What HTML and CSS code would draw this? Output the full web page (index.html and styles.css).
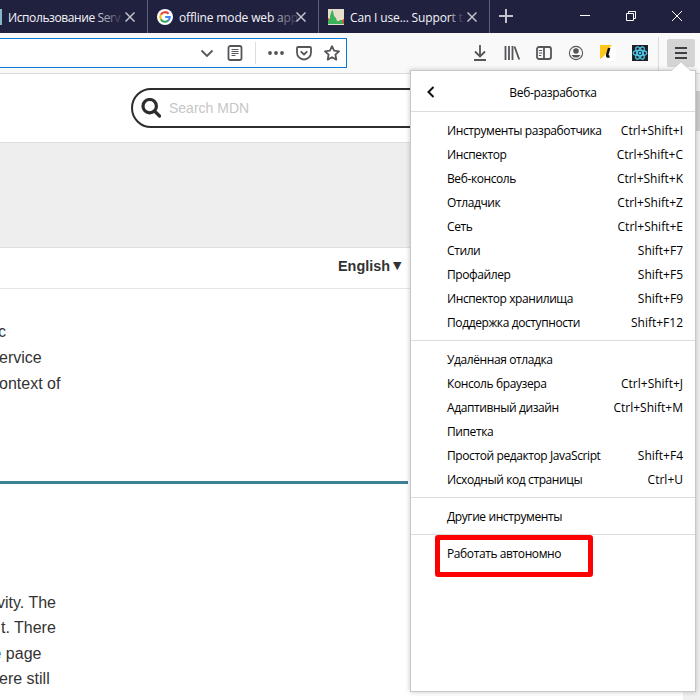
FILE: index.html
```html
<!DOCTYPE html>
<html lang="ru">
<head>
<meta charset="utf-8">
<title>Веб-разработка</title>
<link rel="stylesheet" href="styles.css">
</head>
<body>
<div class="window">
  <header class="tabs">
    <div class="tab tab-first">
      <span class="favicon-strip"></span>
      <span class="tab-title">Использование <span class="f1">S</span><span class="f2">e</span><span class="f3">r</span><span class="f4">v</span></span>
      <svg class="close" viewBox="0 0 10 10"><path d="M.5.5l9 9M9.5.5l-9 9"/></svg>
    </div>
    <div class="tab tab-google">
      <svg class="favicon" viewBox="0 0 16 16"><circle cx="8" cy="8" r="8" fill="#fff"/><g fill="none" stroke-width="2.1"><path d="M11.6 4.7A4.8 4.8 0 0 0 3.8 5.7" stroke="#ea4335"/><path d="M3.8 5.7a4.8 4.8 0 0 0 0 4.6" stroke="#fbbc05"/><path d="M3.8 10.3a4.8 4.8 0 0 0 7.3 1.3" stroke="#34a853"/><path d="M11.1 11.6A4.8 4.8 0 0 0 12.8 8H8.2" stroke="#4285f4"/></g></svg>
      <span class="tab-title">offline mode web <span class="f2">a</span><span class="f3">p</span><span class="f4">p</span></span>
      <svg class="close" viewBox="0 0 10 10"><path d="M.5.5l9 9M9.5.5l-9 9"/></svg>
    </div>
    <div class="tab tab-caniuse">
      <svg class="favicon" viewBox="0 0 16 16"><path fill="#e6decb" d="M0 0h16v16H0z"/><path fill="#e04b3a" d="M0 9l2 1 2-1 4 4 3-1 3-1 2-1v5H0z"/><path fill="#38b45a" d="M0 15v-3l2-2V7l1-3 1-3 1 1 1 5 2 2 1 3 2 1 1-2 2 0 1 3v1z"/></svg>
      <span class="tab-title">Can I use... Suppor<span class="f2">t</span> <span class="f4">t</span></span>
      <svg class="close" viewBox="0 0 10 10"><path d="M.5.5l9 9M9.5.5l-9 9"/></svg>
    </div>
    <svg class="new-tab" viewBox="0 0 14 14"><path d="M7 0v14M0 7h14"/></svg>
    <div class="controls">
      <svg viewBox="0 0 10 10"><path d="M0 4.5h10"/></svg>
      <svg viewBox="0 0 10 10"><path d="M.5 2.5h7v7h-7zM2.500 2.500v-2h7v7h-2"/></svg>
      <svg viewBox="0 0 10 10"><path d="M0 0l10 10M10 0L0 10"/></svg>
    </div>
  </header>

  <nav class="toolbar">
    <div class="urlbar">
      <svg class="ic chevron" viewBox="0 0 16 16"><path d="M2.500 5.500L8 11l5.500-5.500"/></svg>
      <svg class="ic reader" viewBox="0 0 16 16"><rect x="1.500" y="1" width="13" height="14" rx="1.800"/><path class="thin" d="M4.500 4.500h7M4.500 6.500h7M4.500 8.500h7M4.500 10.500h4"/></svg>
      <span class="url-sep"></span>
      <svg class="ic dots" viewBox="0 0 16 16"><g class="solid"><circle cx="2" cy="8" r="1.900"/><circle cx="8" cy="8" r="1.900"/><circle cx="14" cy="8" r="1.900"/></g></svg>
      <svg class="ic pocket" viewBox="0 0 16 16"><path d="M2 2h12a1 1 0 0 1 1 1v4.500a7 7 0 0 1-14 0V3a1 1 0 0 1 1-1z"/><path d="M4.700 6.300L8 9.500l3.300-3.200"/></svg>
      <svg class="ic star" viewBox="0 0 16 16"><path stroke-linejoin="round" d="M8 1.200l2.100 4.500 4.900.6-3.600 3.400.9 4.900L8 12.200l-4.300 2.400.9-4.900L1 6.300l4.900-.6z"/></svg>
    </div>
    <div class="tools">
      <svg class="ic" viewBox="0 0 16 16"><path d="M8 0v11M3 6.500l5 5 5-5M2 15h12"/></svg>
      <svg class="ic" viewBox="0 0 16 16"><path d="M1.500 1v14M5 1v14M8.500 1v14M10.500 1.500l4.700 13"/></svg>
      <svg class="ic" viewBox="0 0 16 16"><rect x="1" y="2" width="14" height="12" rx="2"/><path d="M8 2v12"/><path class="thin" d="M2.800 5.500h3.400M2.800 8h3.400M2.800 10.500h2.500"/></svg>
      <svg class="ic" viewBox="0 0 16 16"><circle cx="8" cy="8" r="6.600" stroke-width="1.100"/><g class="solid"><circle cx="8" cy="6" r="2.800"/><path d="M3.500 10h9a5.200 5.200 0 0 1-9 0z"/></g></svg>
      <svg class="ic" viewBox="0 0 16 16"><path fill="#fff" stroke="none" d="M0 0h16v16H0z"/><path fill="#ffc61a" stroke="none" d="M0 0h12C8 4 8 9 0 14z"/><path stroke="#111" stroke-width="2.600" d="M9.200 3L7.300 9.500c-.5 2 .3 2.300 2.200 1.800"/></svg>
      <svg class="ic" viewBox="0 0 16 16"><path fill="#202225" stroke="none" d="M0 0h16v16H0z"/><g stroke="#4cc5e8" stroke-width="1.200"><ellipse cx="8" cy="8" rx="6.800" ry="2.700"/><ellipse cx="8" cy="8" rx="6.800" ry="2.700" transform="rotate(60 8 8)"/><ellipse cx="8" cy="8" rx="6.800" ry="2.700" transform="rotate(120 8 8)"/></g><circle cx="8" cy="8" r="1.300" fill="#4cc5e8" stroke="none"/></svg>
    </div>
    <div class="menu-button"><svg class="ic" viewBox="0 0 16 16"><path d="M2 3h12M2 8h12M2 13h12"/></svg></div>
  </nav>

  <main class="page">
    <div class="search-row">
      <div class="search">
        <svg viewBox="0 0 20 20"><circle cx="8.700" cy="8.200" r="6.700"/><path d="M13.500 13l5 5"/></svg>
        <span>Search MDN</span>
      </div>
    </div>
    <div class="banner"></div>
    <div class="language">English <span>▼</span></div>
    <div class="copy intro"><p class="l1">c</p><p class="l2">ervice</p><p class="l3">ontext of</p></div>
    <div class="rule"></div>
    <div class="copy body"><p class="l4">vity. The</p><p class="l5">t. There</p><p class="l6"><a>e</a> page</p><p class="l7">ere still</p></div>
  </main>
  <div class="scrollbar"><div class="thumb"></div></div>

  <aside class="menu">
    <svg class="arrow" viewBox="0 0 20 10"><path d="M0 10L10 1l10 9"/></svg>
    <div class="menu-head">
      <svg viewBox="0 0 8 12"><path d="M6.500 1l-5 5 5 5"/></svg>
      <span>Веб-разработка</span>
    </div>
    <div class="group">
      <div class="item"><span>Инструменты разработчика</span><kbd>Ctrl+Shift+I</kbd></div>
      <div class="item"><span>Инспектор</span><kbd>Ctrl+Shift+C</kbd></div>
      <div class="item"><span>Веб-консоль</span><kbd>Ctrl+Shift+K</kbd></div>
      <div class="item"><span>Отладчик</span><kbd>Ctrl+Shift+Z</kbd></div>
      <div class="item"><span>Сеть</span><kbd>Ctrl+Shift+E</kbd></div>
      <div class="item"><span>Стили</span><kbd>Shift+F7</kbd></div>
      <div class="item"><span>Профайлер</span><kbd>Shift+F5</kbd></div>
      <div class="item"><span>Инспектор хранилища</span><kbd>Shift+F9</kbd></div>
      <div class="item"><span>Поддержка доступности</span><kbd>Shift+F12</kbd></div>
    </div>
    <div class="group">
      <div class="item"><span>Удалённая отладка</span></div>
      <div class="item"><span>Консоль браузера</span><kbd>Ctrl+Shift+J</kbd></div>
      <div class="item"><span>Адаптивный дизайн</span><kbd>Ctrl+Shift+M</kbd></div>
      <div class="item"><span>Пипетка</span></div>
      <div class="item"><span>Простой редактор JavaScript</span><kbd>Shift+F4</kbd></div>
      <div class="item"><span>Исходный код страницы</span><kbd>Ctrl+U</kbd></div>
    </div>
    <div class="group">
      <div class="item"><span>Другие инструменты</span></div>
    </div>
    <div class="group">
      <div class="item"><span>Работать автономно</span></div>
    </div>
    <div class="highlight"></div>
  </aside>
</div>
</body>
</html>
```

FILE: styles.css
```css
* { box-sizing: border-box; }
body { margin: 0; font-family: "Open Sans", "Noto Sans", sans-serif; }
p { margin: 0; }
svg { display: block; flex: none; fill: none; }
.window { position: relative; width: 700px; height: 700px; overflow: hidden; background: #fff; }

.tabs { display: flex; height: 33px; background: #20213f; color: #f4f4f8; font-size: 12px; }
.tab { display: flex; align-items: center; height: 33px; padding-top: 1px; border-right: 1px solid #5f607b; }
.tab-first { width: 148px; }
.tab-google { width: 171px; padding-left: 9px; }
.tab-caniuse { width: 171px; padding-left: 9px; }
.favicon-strip { width: 2px; height: 16px; margin-right: 6px; background: #83b9c4; }
.favicon { width: 16px; height: 16px; margin-right: 6px; }
.tab-title { width: 112px; white-space: nowrap; letter-spacing: -.15px; }
.tab-first .tab-title { width: 111px; letter-spacing: -.4px; }
.f1 { opacity: .75; }
.f2 { opacity: .6; }
.f3 { opacity: .4; }
.f4 { opacity: .2; }
.close { width: 10px; height: 10px; margin-left: 6px; stroke: #c3c3ce; stroke-width: 1.5; }
.tab-google .close, .tab-caniuse .close { margin-left: 5px; }
.new-tab { width: 14px; height: 14px; margin: 9px 0 0 9px; stroke: #c3c3ce; stroke-width: 2; }
.controls { display: flex; gap: 36px; margin: 11px 0 0 67px; }
.controls svg { width: 10px; height: 10px; stroke: #fff; stroke-width: 1; }

.toolbar { display: flex; height: 41px; background: #f9f9fa; border-bottom: 1px solid #dadadb; }
.urlbar { display: flex; align-items: center; width: 347px; height: 30px; margin-top: 5px; padding-left: 199px; background: #fff; border: 1px solid #0a78d6; border-left: 0; }
.ic { width: 16px; height: 16px; stroke: #55565a; stroke-width: 1.8; }
.ic .thin { stroke-width: 1; }
.ic .solid { fill: #55565a; stroke: none; }
.reader { margin-left: 12px; }
.url-sep { width: 1px; height: 22px; margin: 0 12px; background: #dedede; }
.pocket, .star { margin-left: 12px; }
.tools { display: flex; gap: 16px; width: 312px; height: 36px; margin-top: 4px; padding: 8px 0 0 125px; border-right: 1px solid #dcdcdd; }
.menu-button { display: flex; justify-content: center; width: 28px; height: 28px; margin: 6px 0 0 8px; padding-top: 6px; border-radius: 2px; background: #d4d4d4; }
.menu-button .ic { stroke: #3e3f42; }

.search-row { height: 68px; padding: 14px 0 0 131px; }
.search { display: flex; align-items: center; width: 400px; height: 40px; padding-left: 8px; border: 2px solid #2d2d2d; border-radius: 20px; color: #c6c6c6; font: 14px "Liberation Sans", sans-serif; }
.search svg { width: 20px; height: 20px; margin-right: 8px; stroke: #2d2d2d; stroke-width: 3.2; stroke-linecap: round; }
.banner { height: 106px; background: #eee; border-top: 1px solid #dadfdf; border-bottom: 1px solid #dce0e0; }
.language { display: flex; gap: 3px; height: 41px; padding: 9px 0 0 338px; border-bottom: 1px solid #e6e6e6; color: #333; font: bold 14.4px/18px "Liberation Sans", sans-serif; }
.language span { font: 11px/18px "DejaVu Sans", sans-serif; }
.copy { color: #333; font: 16px/25.500px "Liberation Sans", sans-serif; white-space: pre; }
.intro { height: 192px; padding-top: 30px; line-height: 25.8px; }
.l1 { margin-left: -2px; }
.l2, .l3 { margin-left: -1px; }
.l4 { margin-left: -3px; }
.l5 { margin-left: 1px; }
.l6 { margin-left: -7.500px; }
.l7 { margin-left: -1px; }
.copy a { color: #3d7eae; }
.rule { width: 408px; height: 3px; background: #3b8093; }
.body { padding-top: 106px; line-height: 25.300px; }

.scrollbar { position: absolute; top: 74px; right: 0; width: 17px; height: 626px; padding-top: 17px; background: #f0f0f0; }
.thumb { height: 40px; background: #cdcdcd; }

.menu { position: absolute; left: 410px; top: 70px; width: 286px; height: 622px; background: #fff; border: 1px solid #c8c8c8; box-shadow: 0 0 5px rgba(0, 0, 0, .22); color: #000; font-size: 12px; }
.arrow { position: absolute; top: -10px; left: 260px; width: 20px; height: 10px; fill: #fff; stroke: #c8c8c8; stroke-width: .7; }
.menu-head { display: flex; align-items: center; height: 40px; padding: 2px 0 0 16px; }
.menu-head svg { width: 8px; height: 12px; stroke: #111; stroke-width: 2; }
.menu-head span { width: 236px; text-align: center; letter-spacing: -.35px; }
.group { padding: 7px 12px 5px 36px; border-top: 1px solid #dcdcdc; }
.item { display: flex; justify-content: space-between; height: 24px; line-height: 24px; white-space: nowrap; letter-spacing: -.4px; }
kbd { font: inherit; letter-spacing: 0; }
.highlight { position: absolute; left: 24px; top: 464px; width: 158px; height: 42px; border: 5px solid #f00; border-radius: 3px; }
```
